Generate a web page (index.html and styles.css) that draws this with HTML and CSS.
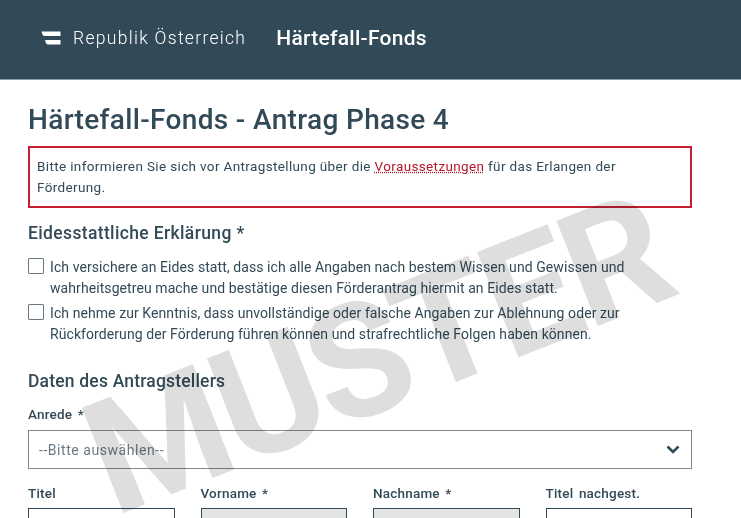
FILE: index.html
```html
<!DOCTYPE html>

<html>
    <head>
        <meta charset="utf-8">
        <link rel="stylesheet" href="styles.css">
    </head>

    <body>
        <header class="top-bar">
            <svg class="logo" width="20" height="14" viewBox="0 0 20 14">
                <path d="M0.5 0.5 H19.5 V5 H3.5 Q1.5 5 0.5 0.5 Z" fill="white"></path>
                <path d="M4 9 H19.5 V13.5 H7 Q5 13.5 4 9 Z" fill="white"></path>
            </svg>
            <span class="brand">Republik Österreich</span>
            <span class="app-name">Härtefall-Fonds</span>
        </header>

        <main class="content">
            <h1>Härtefall-Fonds - Antrag Phase 4</h1>

            <div class="notice">
                Bitte informieren Sie sich vor Antragstellung über die <a href="#">Voraussetzungen</a> für das Erlangen der Förderung.
            </div>

            <h2 class="oath-title">Eidesstattliche Erklärung *</h2>

            <div class="check-row">
                <span class="check-box"></span>
                <p>Ich versichere an Eides statt, dass ich alle Angaben nach bestem Wissen und Gewissen und wahrheitsgetreu mache und bestätige diesen Förderantrag hiermit an Eides statt.</p>
            </div>
            <div class="check-row">
                <span class="check-box"></span>
                <p>Ich nehme zur Kenntnis, dass unvollständige oder falsche Angaben zur Ablehnung oder zur Rückforderung der Förderung führen können und strafrechtliche Folgen haben können.</p>
            </div>

            <h2 class="person-title">Daten des Antragstellers</h2>

            <label class="field-label">Anrede *</label>
            <div class="select-box">
                <span>--Bitte auswählen--</span>
                <svg width="14" height="9" viewBox="0 0 14 9">
                    <path d="M1.5 1.5 L7 7 L12.5 1.5" fill="none" stroke="#324a57" stroke-width="2.6"></path>
                </svg>
            </div>

            <div class="name-grid">
                <div>
                    <label class="field-label">Titel</label>
                    <div class="input-box"></div>
                </div>
                <div>
                    <label class="field-label">Vorname *</label>
                    <div class="input-box filled"></div>
                </div>
                <div>
                    <label class="field-label">Nachname *</label>
                    <div class="input-box filled"></div>
                </div>
                <div>
                    <label class="field-label">Titel nachgest.</label>
                    <div class="input-box"></div>
                </div>
            </div>
        </main>

        <div class="watermark">MUSTER</div>
    </body>
</html>
```

FILE: styles.css
```css
html, body
{
    height: 518px;
    overflow: hidden;
}
body
{
    margin: 0;
    background: white;
    color: #324a57;
    font-family: "Roboto", "Liberation Sans", sans-serif;
    position: relative;
}

.top-bar
{
    height: 79px;
    background: #324a57;
    border-bottom: 1px solid #8d9ba3;
    display: flex;
    align-items: center;
    padding-left: 41px;
    color: white;
}
.logo { margin-right: 12px; margin-bottom: 4px; }
.brand { font-size: 17.5px; letter-spacing: 1.3px; font-weight: 300; margin-right: 30px; margin-bottom: 3px; }
.app-name { font-size: 21px; letter-spacing: 0.27px; font-weight: 500; margin-bottom: 3px; }

.content { padding: 0 49px 0 28px; }

h1
{
    margin: 24px 0 0;
    font-size: 28px;
    line-height: 32px;
    font-weight: 500;
    letter-spacing: 0.34px;
}

.notice
{
    margin-top: 10px;
    border: 2px solid #c4202f;
    padding: 8px 30px 6px 7px;
    font-size: 13.5px;
    line-height: 21px;
    letter-spacing: 0.36px;
    height: 62px;
    box-sizing: border-box;
}
.notice a
{
    color: #b5162b;
    text-decoration: underline dotted #b5162b;
}

h2
{
    font-weight: 500;
    margin: 0;
    line-height: 20px;
    font-size: 17.5px;
}
.oath-title { margin-top: 15px; margin-bottom: 14px; letter-spacing: 0.36px; }
.person-title { margin-top: 26px; letter-spacing: 0.19px; }

.check-row
{
    display: flex;
    gap: 6px;
    margin-bottom: 4px;
}
.check-row p
{
    margin: 0;
    font-size: 14px;
    line-height: 21px;
    font-weight: 400;
    width: 590px;
    letter-spacing: 0.08px;
}
.check-box
{
    width: 14px;
    height: 14px;
    border: 1px solid #6a7a84;
    border-radius: 1px;
    flex: none;
    margin-top: 1px;
}

.field-label
{
    display: block;
    font-size: 13.5px;
    line-height: 18px;
    font-weight: 500;
    letter-spacing: 0.2px;
    word-spacing: 2px;
}
.person-title + .field-label { margin-top: 14px; }

.select-box
{
    margin-top: 7px;
    height: 39px;
    box-sizing: border-box;
    border: 1px solid #7d8a92;
    display: flex;
    align-items: center;
    justify-content: space-between;
    padding: 0 11px 0 10px;
    font-size: 14px;
    color: #6b7a84;
    letter-spacing: 0.55px;
}

.name-grid
{
    display: grid;
    grid-template-columns: repeat(4, 1fr);
    column-gap: 26px;
    margin-top: 15px;
}
.input-box
{
    margin-top: 6px;
    height: 30px;
    box-sizing: border-box;
    border: 1px solid #324a57;
    background: white;
}
.input-box.filled { background: #e3e5e5; }

.watermark
{
    position: absolute;
    left: 65px;
    top: 392px;
    font-family: "Roboto", sans-serif;
    font-weight: 700;
    font-size: 159px;
    line-height: 159px;
    letter-spacing: -4px;
    color: #dedede;
    transform: rotate(-21.5deg);
    transform-origin: 0 0;
    mix-blend-mode: multiply;
    white-space: nowrap;
}
```
